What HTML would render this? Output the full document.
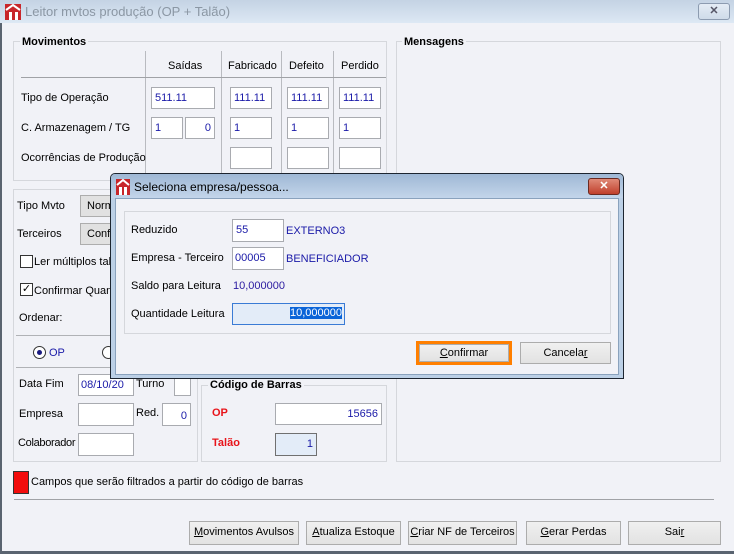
<!DOCTYPE html>
<html><head><meta charset="utf-8"><style>
*{box-sizing:border-box;margin:0;padding:0}
html,body{width:734px;height:554px;overflow:hidden}
body{background:#f1f2f7;font-family:"Liberation Sans",sans-serif;font-size:11px;color:#000;position:relative}
.a{position:absolute;white-space:nowrap}
.t{position:absolute;white-space:nowrap;line-height:14px}
.in{position:absolute;background:#fff;border:1px solid #a9abb0;color:#1a1aa8;font-size:11px;line-height:20px;padding:0 3px;overflow:hidden;white-space:nowrap}
.r{text-align:right}
.gb{position:absolute;border:1px solid #d5d7dc}
.gl{position:absolute;background:#f1f2f7;font-weight:bold;padding:0 2px;line-height:14px;white-space:nowrap}
.vl{position:absolute;width:1px;background:#b9bbc0}
.hl{position:absolute;height:1px;background:#a0a2a6}
.btn{position:absolute;background:linear-gradient(#f0f0f0,#e2e2e2);border:1px solid #acacac;text-align:center;line-height:21px;font-size:11px;white-space:nowrap;overflow:hidden}
.cb{position:absolute;width:13px;height:13px;border:1px solid #333;background:#fff}
.combo{position:absolute;background:#e1e1e1;border:1px solid #adadad;line-height:20px;padding-left:6px;overflow:hidden;white-space:nowrap}
</style></head><body>
<div class="a" style="left:0;top:0;width:734px;height:23px;background:linear-gradient(#c4d3e4,#dde8f4)"></div>
<svg class="a" style="left:5px;top:4px" width="16" height="16"><rect x="0" y="0" width="16" height="16" fill="#c8262a"/><path d="M1 6 L8 1 L15 6" stroke="#fff" stroke-width="2" fill="none"/><rect x="4" y="8" width="3" height="8" fill="#fff"/><rect x="10" y="8" width="3" height="8" fill="#fff"/></svg>
<div class="t" style="left:25px;top:5px;font-size:13px;color:#8b97a4">Leitor mvtos produção (OP + Talão)</div>
<div class="a" style="left:698px;top:3px;width:32px;height:17px;border:1px solid #8c9bb0;border-radius:3px;background:linear-gradient(#e4ecf5,#cfdbe9);text-align:center;line-height:15px;color:#556;font-weight:bold">✕</div>
<div class="a" style="left:0;top:23px;width:2px;height:531px;background:#5a6470"></div>
<div class="a" style="left:0;top:551px;width:734px;height:3px;background:#5a6470"></div>

<div class="gb" style="left:13px;top:41px;width:374px;height:140px"></div>
<div class="gl" style="left:20px;top:35px">Movimentos</div>
<div class="vl" style="left:145px;top:51px;height:130px"></div>
<div class="vl" style="left:221px;top:51px;height:130px"></div>
<div class="vl" style="left:281px;top:51px;height:130px"></div>
<div class="vl" style="left:333px;top:51px;height:130px"></div>
<div class="hl" style="left:21px;top:77px;width:365px"></div>
<div class="t" style="left:168px;top:59px">Saídas</div>
<div class="t" style="left:228px;top:59px">Fabricado</div>
<div class="t" style="left:289px;top:59px">Defeito</div>
<div class="t" style="left:341px;top:59px">Perdido</div>
<div class="t" style="left:21px;top:91px">Tipo de Operação</div>
<div class="t" style="left:21px;top:121px">C. Armazenagem / TG</div>
<div class="t" style="left:21px;top:151px">Ocorrências de Produção</div>
<div class="in" style="left:151px;top:87px;width:64px;height:22px">511.11</div>
<div class="in" style="left:230px;top:87px;width:42px;height:22px">111.11</div>
<div class="in" style="left:287px;top:87px;width:42px;height:22px">111.11</div>
<div class="in" style="left:339px;top:87px;width:42px;height:22px">111.11</div>
<div class="in" style="left:151px;top:117px;width:32px;height:22px">1</div>
<div class="in r" style="left:185px;top:117px;width:30px;height:22px">0</div>
<div class="in" style="left:230px;top:117px;width:42px;height:22px">1</div>
<div class="in" style="left:287px;top:117px;width:42px;height:22px">1</div>
<div class="in" style="left:339px;top:117px;width:42px;height:22px">1</div>
<div class="in" style="left:230px;top:147px;width:42px;height:22px"></div>
<div class="in" style="left:287px;top:147px;width:42px;height:22px"></div>
<div class="in" style="left:339px;top:147px;width:42px;height:22px"></div>

<div class="gb" style="left:396px;top:41px;width:325px;height:421px"></div>
<div class="gl" style="left:402px;top:35px">Mensagens</div>

<div class="gb" style="left:13px;top:189px;width:185px;height:273px"></div>
<div class="t" style="left:17px;top:199px">Tipo Mvto</div>
<div class="combo" style="left:80px;top:195px;width:40px;height:22px">Norm</div>
<div class="t" style="left:17px;top:227px">Terceiros</div>
<div class="combo" style="left:80px;top:223px;width:40px;height:22px">Conf</div>
<div class="cb" style="left:20px;top:255px"></div>
<div class="t" style="left:34px;top:255px">Ler múltiplos talões</div>
<div class="cb" style="left:20px;top:283px;font-size:11px;line-height:11px;text-align:center">✓</div>
<div class="t" style="left:34px;top:284px">Confirmar Quantidade</div>
<div class="t" style="left:19px;top:311px">Ordenar:</div>
<div class="hl" style="left:16px;top:335px;width:180px;background:#b0b2b6"></div>
<div class="a" style="left:33px;top:346px;width:13px;height:13px;border:1px solid #333;border-radius:50%;background:#fff"><div style="margin:3px;width:5px;height:5px;border-radius:50%;background:#1a1a80"></div></div>
<div class="t" style="left:49px;top:346px;color:#1a1aa8">OP</div>
<div class="a" style="left:102px;top:346px;width:13px;height:13px;border:1px solid #333;border-radius:50%;background:#fff"></div>
<div class="hl" style="left:16px;top:367px;width:180px;background:#b0b2b6"></div>
<div class="t" style="left:19px;top:377px">Data Fim</div>
<div class="in" style="left:78px;top:374px;width:56px;height:22px;padding:0 2px">08/10/20</div>
<div class="t" style="left:136px;top:377px">Turno</div>
<div class="in" style="left:174px;top:376px;width:17px;height:20px"></div>
<div class="t" style="left:19px;top:407px">Empresa</div>
<div class="in" style="left:78px;top:403px;width:56px;height:23px"></div>
<div class="t" style="left:136px;top:406px">Red.</div>
<div class="in r" style="left:162px;top:403px;width:29px;height:23px;line-height:25px">0</div>
<div class="t" style="left:18px;top:436px;letter-spacing:-0.3px">Colaborador</div>
<div class="in" style="left:78px;top:433px;width:56px;height:23px"></div>

<div class="gb" style="left:201px;top:385px;width:186px;height:77px"></div>
<div class="gl" style="left:208px;top:378px">Código de Barras</div>
<div class="t" style="left:212px;top:406px;color:#e8141a;font-weight:bold">OP</div>
<div class="in r" style="left:275px;top:403px;width:107px;height:22px">15656</div>
<div class="t" style="left:212px;top:436px;color:#e8141a;font-weight:bold">Talão</div>
<div class="in r" style="left:275px;top:433px;width:42px;height:23px;background:#e3ecf8;border-color:#707070">1</div>

<div class="a" style="left:13px;top:471px;width:16px;height:23px;background:#f20c0c;border:1px solid #333"></div>
<div class="t" style="left:31px;top:475px">Campos que serão filtrados a partir do código de barras</div>
<div class="hl" style="left:14px;top:499px;width:700px"></div>

<div class="btn" style="left:189px;top:521px;width:110px;height:24px"><u>M</u>ovimentos Avulsos</div>
<div class="btn" style="left:306px;top:521px;width:95px;height:24px"><u>A</u>tualiza Estoque</div>
<div class="btn" style="left:408px;top:521px;width:109px;height:24px"><u>C</u>riar NF de Terceiros</div>
<div class="btn" style="left:526px;top:521px;width:95px;height:24px"><u>G</u>erar Perdas</div>
<div class="btn" style="left:628px;top:521px;width:93px;height:24px">Sai<u>r</u></div>

<div class="a" style="left:110px;top:173px;width:514px;height:206px;border:1px solid #1d2530;border-radius:5px 5px 0 0;background:#bcd0e6"></div>
<div class="a" style="left:111px;top:174px;width:512px;height:24px;border-radius:4px 4px 0 0;background:linear-gradient(#9fb8d5,#c3d5ea)"></div>
<svg class="a" style="left:116px;top:179px" width="14" height="16"><rect width="14" height="16" fill="#c8262a"/><path d="M1 6 L7 1 L13 6" stroke="#fff" stroke-width="2" fill="none"/><rect x="3" y="8" width="3" height="8" fill="#fff"/><rect x="8" y="8" width="3" height="8" fill="#fff"/></svg>
<div class="t" style="left:134px;top:180px;font-size:12px">Seleciona empresa/pessoa...</div>
<div class="a" style="left:588px;top:178px;width:32px;height:17px;border:1px solid #6b2a22;border-radius:3px;background:linear-gradient(#e08a78,#c0402c);text-align:center;line-height:15px;color:#fff;font-weight:bold">✕</div>
<div class="a" style="left:115px;top:198px;width:504px;height:177px;background:#f1f2f7;border:1px solid #8aa2bd"></div>
<div class="gb" style="left:124px;top:211px;width:487px;height:123px"></div>
<div class="t" style="left:131px;top:223px">Reduzido</div>
<div class="in" style="left:232px;top:219px;width:52px;height:23px;line-height:21px">55</div>
<div class="t" style="left:286px;top:224px;color:#1a1aa8;font-size:11px">EXTERNO3</div>
<div class="t" style="left:131px;top:251px">Empresa - Terceiro</div>
<div class="in" style="left:232px;top:247px;width:52px;height:23px;line-height:21px;padding:0 2px">00005</div>
<div class="t" style="left:286px;top:252px;color:#1a1aa8;font-size:11px">BENEFICIADOR</div>
<div class="t" style="left:131px;top:279px">Saldo para Leitura</div>
<div class="t" style="left:233px;top:279px;color:#2a1aa0">10,000000</div>
<div class="t" style="left:131px;top:307px">Quantidade Leitura</div>
<div class="in r" style="left:232px;top:303px;width:113px;height:22px;background:#e3ecf8;border-color:#3a7bd5;padding-right:2px;line-height:18px"><span style="background:#0a64d8;color:#fff">10,000000</span></div>
<div class="a" style="left:416px;top:341px;width:96px;height:24px;border:3px solid #ff7f00;background:#ff7f00"></div>
<div class="btn" style="left:419px;top:344px;width:90px;height:18px;line-height:17px"><u>C</u>onfirmar</div>
<div class="btn" style="left:520px;top:342px;width:91px;height:22px">Cancela<u>r</u></div>
</body></html>
